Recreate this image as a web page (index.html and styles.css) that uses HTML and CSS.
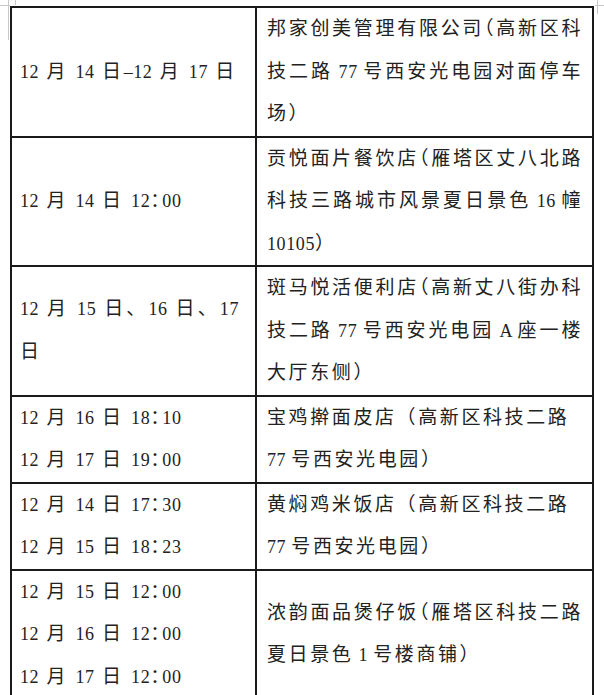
FILE: index.html
```html
<!DOCTYPE html>
<html lang="zh-CN">
<head>
<meta charset="utf-8">
<title>行程表</title>
<link rel="stylesheet" href="styles.css">
</head>
<body>
<div class="mark mark-tl-v"></div>
<div class="mark mark-tl-h"></div>
<div class="mark mark-tl-s"></div>
<div class="mark mark-tr-v"></div>
<div class="mark mark-tr-h"></div>
<table class="sheet">
  <tr>
    <td class="c-time"><span class="ln"><span class="n">12</span> 月 <span class="n">14</span> 日<span class="n">–12</span> 月 <span class="n">17</span> 日</span></td>
    <td class="c-place">
      <span class="ln j">邦家创美管理有限公司<span class="p">（</span>高新区科</span>
      <span class="ln j">技二路<span class="n"> 77 </span>号西安光电园对面停车</span>
      <span class="ln">场）</span>
    </td>
  </tr>
  <tr>
    <td class="c-time"><span class="ln"><span class="n">12</span> 月 <span class="n">14</span> 日 <span class="n">12</span><span class="p">：</span><span class="n">00</span></span></td>
    <td class="c-place">
      <span class="ln j">贡悦面片餐饮店<span class="p">（</span>雁塔区丈八北路</span>
      <span class="ln j">科技三路城市风景夏日景色<span class="n"> 16 </span>幢</span>
      <span class="ln"><span class="n">10105</span>）</span>
    </td>
  </tr>
  <tr>
    <td class="c-time">
      <span class="ln j"><span class="n">12</span> 月 <span class="n">15</span> 日、<span class="n">16</span> 日、<span class="n">17</span></span>
      <span class="ln">日</span>
    </td>
    <td class="c-place">
      <span class="ln j">斑马悦活便利店<span class="p">（</span>高新丈八街办科</span>
      <span class="ln j">技二路<span class="n"> 77 </span>号西安光电园<span class="n"> A </span>座一楼</span>
      <span class="ln">大厅东侧）</span>
    </td>
  </tr>
  <tr>
    <td class="c-time">
      <span class="ln"><span class="n">12</span> 月 <span class="n">16</span> 日 <span class="n">18</span><span class="p">：</span><span class="n">10</span></span>
      <span class="ln"><span class="n">12</span> 月 <span class="n">17</span> 日 <span class="n">19</span><span class="p">：</span><span class="n">00</span></span>
    </td>
    <td class="c-place">
      <span class="ln">宝鸡擀面皮店（高新区科技二路</span>
      <span class="ln"><span class="n">77 </span>号西安光电园）</span>
    </td>
  </tr>
  <tr>
    <td class="c-time">
      <span class="ln"><span class="n">12</span> 月 <span class="n">14</span> 日 <span class="n">17</span><span class="p">：</span><span class="n">30</span></span>
      <span class="ln"><span class="n">12</span> 月 <span class="n">15</span> 日 <span class="n">18</span><span class="p">：</span><span class="n">23</span></span>
    </td>
    <td class="c-place">
      <span class="ln">黄焖鸡米饭店（高新区科技二路</span>
      <span class="ln"><span class="n">77 </span>号西安光电园）</span>
    </td>
  </tr>
  <tr>
    <td class="c-time">
      <span class="ln"><span class="n">12</span> 月 <span class="n">15</span> 日 <span class="n">12</span><span class="p">：</span><span class="n">00</span></span>
      <span class="ln"><span class="n">12</span> 月 <span class="n">16</span> 日 <span class="n">12</span><span class="p">：</span><span class="n">00</span></span>
      <span class="ln"><span class="n">12</span> 月 <span class="n">17</span> 日 <span class="n">12</span><span class="p">：</span><span class="n">00</span></span>
    </td>
    <td class="c-place">
      <span class="ln j">浓韵面品煲仔饭<span class="p">（</span>雁塔区科技二路</span>
      <span class="ln">夏日景色<span class="n"> 1 </span>号楼商铺）</span>
    </td>
  </tr>
</table>
</body>
</html>
```

FILE: styles.css
```css
html, body {
  margin: 0;
  padding: 0;
  background: #ffffff;
}

body {
  position: relative;
  width: 604px;
  height: 695px;
  overflow: hidden;
  font-family: "Liberation Serif", "Noto Sans CJK SC", serif;
  font-size: 19px;
  letter-spacing: 2.6px;
  color: #222222;
}

.sheet {
  border-collapse: separate;
  border-spacing: 0;
  table-layout: fixed;
  width: 584px;
  margin: 6px 0 0 10px;
  border-top: 2px solid #1a1a1a;
  border-left: 2px solid #1a1a1a;
}

.sheet td {
  box-sizing: border-box;
  border-right: 2px solid #1a1a1a;
  border-bottom: 2px solid #1a1a1a;
  vertical-align: middle;
  line-height: 42.5px;
  padding: 0;
}

.c-time {
  width: 245px;
  padding: 0 16px 0 8px !important;
}

.c-place {
  width: 337px;
  padding: 0 9px 0 10px !important;
}

.ln {
  display: block;
  white-space: nowrap;
}

.ln.j {
  text-align: justify;
  text-align-last: justify;
}

.n {
  font-size: 18px;
  letter-spacing: 0.6px;
}

.p {
  font-feature-settings: "halt" 1;
}

.mark {
  position: absolute;
  background: #c8c8c8;
}

.mark-tl-v { left: 8px; top: 0; width: 1px; height: 40px; }
.mark-tl-h { left: 0; top: 5px; width: 10px; height: 1px; }
.mark-tl-s { left: 15px; top: 0; width: 1px; height: 5px; }
.mark-tr-v { left: 597px; top: 0; width: 1px; height: 14px; }
.mark-tr-h { left: 595px; top: 5px; width: 9px; height: 1px; }
```
